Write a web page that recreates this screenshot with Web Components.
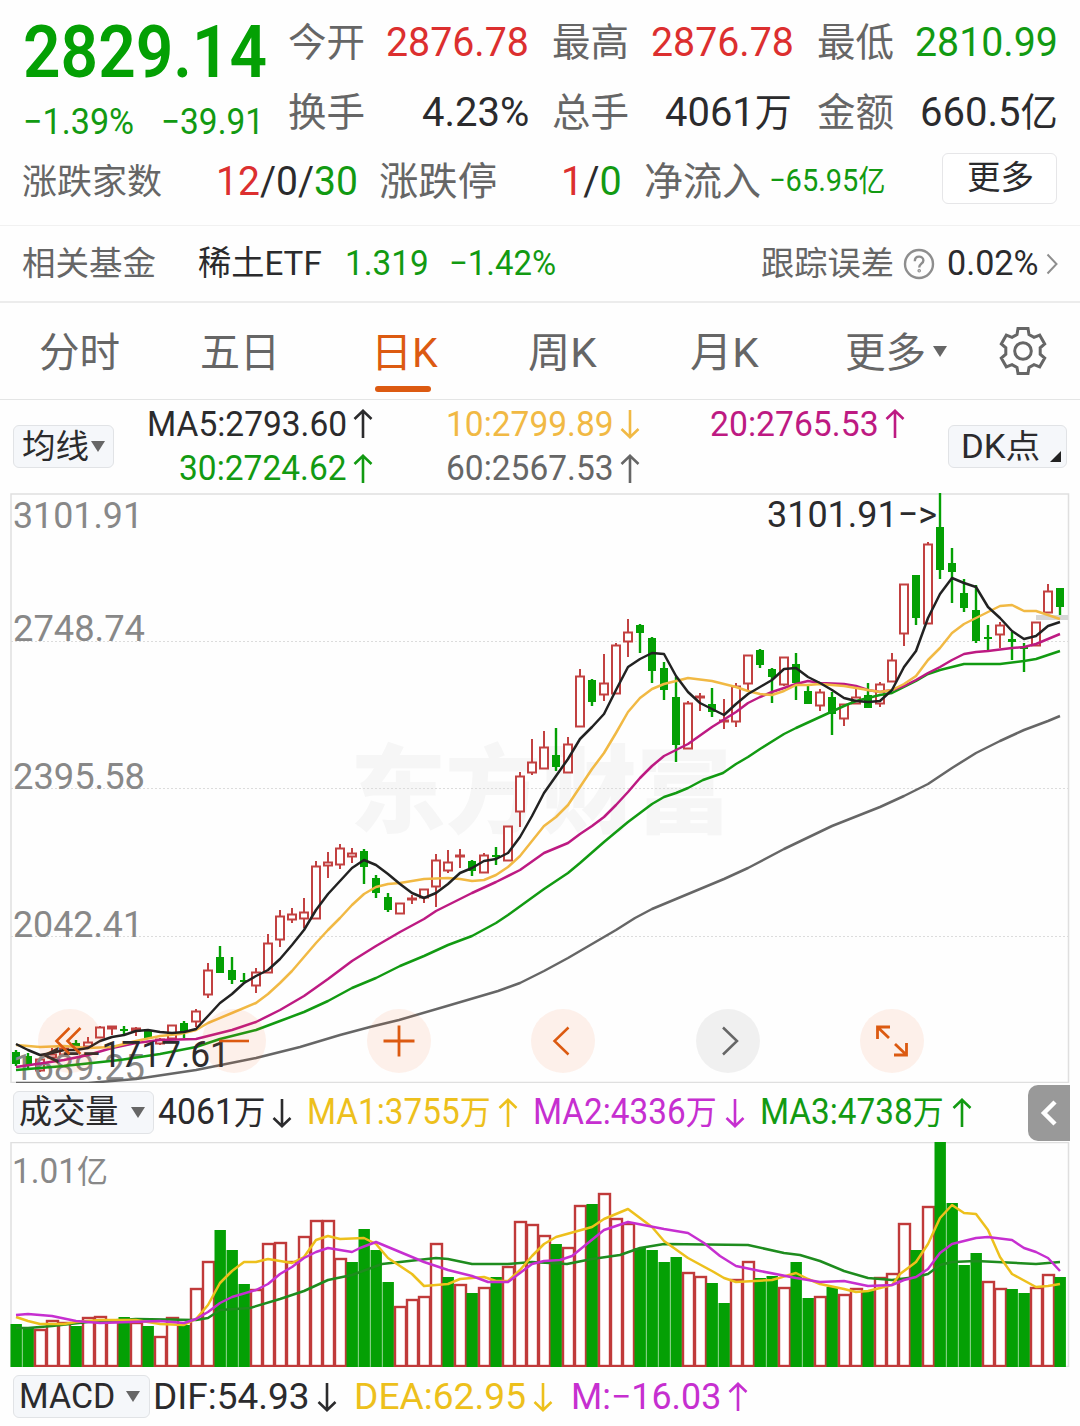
<!DOCTYPE html>
<html lang="zh-CN">
<head>
<meta charset="utf-8">
<title>稀土 2829.14</title>
<style>
	body {
		margin: 0;
		width: 1080px;
		height: 1426px;
		overflow: hidden;
		background: #fefefe;
		color: #2b2b2d;
		font-family: Roboto, "Noto Sans CJK SC", sans-serif;
		--up: #dc2f2f;
		--down: #129a12;
		--label: #666;
		--accent: #dc5a11;
	}
</style>
</head>
<body>
<stock-page></stock-page>

<script>
const define = (name, html, setup) => {
	const template = document.createElement("template");
	template.innerHTML = html;
	customElements.define(name, class extends HTMLElement {
		constructor() {
			super();
			this.attachShadow({ mode: "open" });
			this.shadowRoot.appendChild(template.content.cloneNode(true));
		}

		connectedCallback() {
			if (setup) setup(this, this.shadowRoot);
		}
	});
};

//Text squeezed or stretched to an exact width: w = width, size = font size, gap = space before it.
define("fit-text", `
	<style>
		:host { display: block; flex: none; height: 1.2em; line-height: 1.2em; white-space: nowrap; }
		span { display: inline-block; transform-origin: 0 0; }
		::slotted(small) { font-size: .93em; }
		::slotted(.up) { color: var(--up); }
		::slotted(.down) { color: var(--down); }
	</style>
	<span><slot></slot></span>
`, (host, root) => {
	const w = +host.getAttribute("w");
	const span = root.querySelector("span");
	host.style.fontSize = host.getAttribute("size") + "px";
	host.style.marginLeft = (host.getAttribute("gap") || 0) + "px";
	host.style.width = w + "px";
	span.style.transform = `scaleX(${w / span.offsetWidth})`;
});

const ICONS = {
	up: [20, 30, `<path d="M10 29V2M1.5 10L10 1.8 18.5 10"/>`],
	down: [20, 30, `<path d="M10 1v27M1.5 20L10 28.2 18.5 20"/>`],
	caret: [14, 11, `<path d="M0 0h14L7 11z" fill="currentColor" stroke="none"/>`],
	corner: [11, 11, `<path d="M11 0v11H0z" fill="currentColor" stroke="none"/>`],
	help: [32, 32, `<circle cx="16" cy="16" r="14"/><path d="M11.8 13.2c0-6.4 8.6-5.6 8.6-.8 0 3.2-4.2 3.4-4.2 7"/><circle cx="16.2" cy="22.8" r=".6"/>`],
	next: [12, 22, `<path d="M1.500 1.500L10.500 11 1.500 20.500"/>`],
	gear: [50, 50, `<path d="M20 2.500h10l1 6 5 2.900 5.700-2.200 5 8.700-4.500 3.900v6.400l4.500 3.900-5 8.700-5.700-2.200-5 2.900-1 6H20l-1-6-5-2.900-5.700 2.200-5-8.700 4.500-3.900v-6.400l-4.500-3.900 5-8.700L14 11.400l5-2.900z"/><circle cx="25" cy="25" r="8.300"/>`],
	first: [32, 32, `<path d="M15.500 3L2.500 16l13 13M26.500 3L13.500 16l13 13"/>`],
	minus: [32, 32, `<path d="M1 16h30"/>`],
	plus: [32, 32, `<path d="M.5 16h31M16 .5v31"/>`],
	left: [32, 32, `<path d="M21.500 2.500L7.500 16l14 13.500"/>`],
	right: [32, 32, `<path d="M11 2.500L25 16 11 29.500"/>`],
	expand: [32, 32, `<path d="M1.500 14V2H14M2 2.500l11 10.500M30.500 18v12H18M30 29.500L19 19"/>`],
	back: [18, 28, `<path d="M15 3L4 14l11 11"/>`]
};

//stroke = line width, gap = space before it.
define("stock-icon", `
	<style>
		:host { display: block; flex: none; }
		svg { display: block; fill: none; stroke: currentColor; }
	</style>
	<svg></svg>
`, (host, root) => {
	const [w, h, body] = ICONS[host.getAttribute("name")];
	const svg = root.querySelector("svg");
	svg.setAttribute("width", w);
	svg.setAttribute("height", h);
	svg.setAttribute("stroke-width", host.getAttribute("stroke") || 2.6);
	svg.innerHTML = body;
	host.style.marginLeft = (host.getAttribute("gap") || 0) + "px";
});

define("stock-header", `
	<style>
		:host { display: flex; box-sizing: border-box; height: 226px; flex-direction: column; border-bottom: 1px solid #f1f1f1; }
		.top { display: flex; height: 146px; }
		.price { width: 288px; color: #04a004; }
		.big { display: flex; height: 105px; align-items: center; font-weight: 600; }
		.change { display: flex; height: 36px; align-items: center; color: var(--down); }
		.row { display: flex; height: 69px; align-items: center; }
		.rows .row:first-child { height: 83px; }
		.rows .row + .row { height: 57px; }
		.l { padding-top: 4px; color: var(--label); }
		.up { color: var(--up); }
		.down { color: var(--down); }
		button { display: flex; box-sizing: border-box; width: 115px; height: 51px; margin: 0 0 4px 57px; padding: 0 0 1px; align-items: center; justify-content: center; border: 1.500px solid #e6e6e8; border-radius: 6px; background: #fff; color: inherit; font: inherit; }
	</style>
	<div class="top">
		<div class="price">
			<div class="big"><fit-text w="244" size="72.500" gap="23">2829.14</fit-text></div>
			<div class="change">
				<fit-text w="111" size="36" gap="23">−1.39%</fit-text>
				<fit-text w="103" size="36" gap="27">−39.91</fit-text>
			</div>
		</div>
		<div class="rows">
			<div class="row">
				<fit-text class="l" w="77" size="39">今开</fit-text><fit-text class="up" w="143" size="41.500" gap="21">2876.78</fit-text>
				<fit-text class="l" w="77" size="39" gap="23">最高</fit-text><fit-text class="up" w="143" size="41.500" gap="22">2876.78</fit-text>
				<fit-text class="l" w="77" size="39" gap="23">最低</fit-text><fit-text class="down" w="143" size="41.500" gap="21">2810.99</fit-text>
			</div>
			<div class="row">
				<fit-text class="l" w="77" size="39">换手</fit-text><fit-text w="107" size="41.500" gap="57">4.23%</fit-text>
				<fit-text class="l" w="77" size="39" gap="23">总手</fit-text><fit-text w="127" size="41.500" gap="36">4061<small>万</small></fit-text>
				<fit-text class="l" w="77" size="39" gap="25">金额</fit-text><fit-text w="138" size="41.500" gap="26">660.5<small>亿</small></fit-text>
			</div>
		</div>
	</div>
	<div class="row">
		<fit-text class="l" w="140" size="35" gap="22">涨跌家数</fit-text>
		<fit-text w="142" size="41.500" gap="54"><span class="up">12</span>/0/<span class="down">30</span></fit-text>
		<fit-text class="l" w="118" size="39" gap="21">涨跌停</fit-text>
		<fit-text w="61" size="41.500" gap="64"><span class="up">1</span>/<span class="down">0</span></fit-text>
		<fit-text class="l" w="117" size="39" gap="22">净流入</fit-text>
		<fit-text class="down" w="116" size="31.500" gap="8">−65.95<small>亿</small></fit-text>
		<button><fit-text w="67" size="33">更多</fit-text></button>
	</div>
`);

define("fund-bar", `
	<style>
		:host { display: flex; box-sizing: border-box; height: 77px; align-items: center; border-bottom: 2px solid #ececec; }
		.l { padding-top: 1px; color: var(--label); }
		.down { color: var(--down); }
		.q { color: #8e8e8e; }
	</style>
	<fit-text class="l" w="134" size="33" gap="22">相关基金</fit-text>
	<fit-text w="124" size="34" gap="42">稀土ETF</fit-text>
	<fit-text class="down" w="84" size="34.500" gap="23">1.319</fit-text>
	<fit-text class="down" w="107" size="34.500" gap="20">−1.42%</fit-text>
	<fit-text class="l" w="133" size="33" gap="205">跟踪误差</fit-text>
	<stock-icon class="q" name="help" stroke="2.400" gap="9"></stock-icon>
	<fit-text w="92" size="34.500" gap="12">0.02%</fit-text>
	<stock-icon class="q" name="next" stroke="2" gap="7"></stock-icon>
`);

define("period-tabs", `
	<style>
		:host { display: flex; box-sizing: border-box; height: 97px; align-items: center; border-bottom: 1.500px solid #e4e5e5; color: var(--label); }
		fit-text { padding-top: 5px; }
		.on { display: flex; flex-direction: column; height: 97px; margin-left: 91px; padding-top: 21px; box-sizing: border-box; color: var(--accent); }
		.on::after { content: ""; width: 56px; height: 6px; margin: 8px 0 0 4px; border-radius: 3px; background: var(--accent); }
	</style>
	<fit-text w="81" size="41" gap="39">分时</fit-text>
	<fit-text w="80" size="41" gap="80">五日</fit-text>
	<div class="on"><fit-text w="67" size="41">日K</fit-text></div>
	<fit-text w="69" size="41" gap="90">周K</fit-text>
	<fit-text w="69" size="41" gap="93">月K</fit-text>
	<fit-text w="81" size="41" gap="86">更多</fit-text>
	<stock-icon name="caret" gap="7"></stock-icon>
	<stock-icon name="gear" stroke="3" gap="51"></stock-icon>
`);

//Small button with a label and a mark; the mark goes in its own slot.
define("drop-chip", `
	<style>
		:host { display: flex; box-sizing: border-box; flex: none; height: 43px; align-items: center; border: 1.500px solid #e1e3e6; border-radius: 6px; background: #f5f7fa; }
		.mark { color: #666; }
		:host([corner]) .mark { align-self: flex-end; margin-bottom: 5px; color: #222; }
	</style>
	<slot></slot>
	<div class="mark"><slot name="mark"></slot></div>
`, host => {
	host.style.width = host.getAttribute("w") + "px";
});

define("ma-legend", `
	<style>
		:host { display: flex; height: 93px; align-items: center; }
		drop-chip:first-of-type { margin-left: 13px; }
		.lines { width: 834px; }
		.line { display: flex; height: 44.500px; align-items: center; }
	</style>
	<drop-chip w="101"><fit-text w="67" size="33" gap="8">均线</fit-text><stock-icon slot="mark" name="caret" gap="2"></stock-icon></drop-chip>
	<div class="lines">
		<div class="line">
			<fit-text w="200" size="34.500" gap="33">MA5:2793.60</fit-text><stock-icon name="up" gap="6"></stock-icon>
			<fit-text style="color:#f1b944" w="168" size="34.500" gap="73">10:2799.89</fit-text><stock-icon style="color:#f1b944" name="down" gap="6"></stock-icon>
			<fit-text style="color:#bd1a82" w="169" size="34.500" gap="70">20:2765.53</fit-text><stock-icon style="color:#bd1a82" name="up" gap="6"></stock-icon>
		</div>
		<div class="line">
			<fit-text style="color:#129a12" w="168" size="34.500" gap="65">30:2724.62</fit-text><stock-icon style="color:#129a12" name="up" gap="6"></stock-icon>
			<fit-text style="color:#666" w="168" size="34.500" gap="73">60:2567.53</fit-text><stock-icon style="color:#666" name="up" gap="6"></stock-icon>
		</div>
	</div>
	<drop-chip w="119" corner><fit-text w="79" size="33" gap="12">DK点</fit-text><stock-icon slot="mark" name="corner" gap="10"></stock-icon></drop-chip>
`);

//One candle per 12px: colour, high, body top, body bottom, low.
const CANDLES = `g1050,1052,1064,1066 g1053,1056,1065,1068 r1058,1059,1071,1072 r1048,1054,1058,1060 r1046,1048,1055,1056 g1040,1043,1047,1049 r1037,1042,1047,1047 r1026,1027,1038,1038
r1026,1026,1029,1035 g1026,1029,1031,1034 r1027,1028,1031,1036 g1030,1031,1039,1039 r1038,1039,1044,1045 r1025,1025,1039,1039 g1021,1023,1033,1038 r1009,1011,1022,1027
r963,970,995,998 g946,957,973,973 g957,970,980,984 g973,980,982,984 r968,972,986,993 r934,943,973,973 r910,916,940,947 r908,914,920,923
r898,912,919,928 r861,866,919,919 r852,862,866,878 r844,848,865,869 r848,853,857,863 g849,851,867,884 g875,878,893,898 g893,897,910,912
r903,903,914,914 r895,898,900,904 r889,889,898,903 r854,860,887,907 r850,862,871,873 r849,855,857,868 g860,861,871,876 r853,855,873,873
g847,855,857,865 r826,826,861,861 r772,776,812,827 r739,762,773,775 r731,747,769,769 g728,755,767,771 r737,744,773,773 r669,676,727,727
g679,680,702,706 r654,683,695,701 r643,645,694,694 r619,632,642,657 g624,625,633,653 g637,638,671,683 g662,668,690,700 g677,697,745,762
r701,703,749,749 r693,696,698,711 g688,704,712,717 r699,720,722,729 r683,686,722,727 r655,655,684,690 g649,650,665,668 g668,669,677,703
r657,657,685,686 g653,664,683,700 g684,691,704,704 r689,692,706,711 g692,697,714,735 r704,704,719,726 r688,697,704,704 g683,695,708,708
r682,684,704,707 r653,660,682,682 r584,584,634,646 g575,575,618,625 r542,544,624,624 g493,527,570,579 g548,563,572,603 g579,593,608,612
g585,610,641,643 g625,637,639,651 r622,625,635,648 g632,639,642,660 g643,647,649,672 r622,622,646,646 r584,591,613,613 g588,588,607,615`.split(/\s+/);

const MA60 = "16,1083 88,1083 136,1079 196,1070 256,1058 300,1047 340,1035 370,1027 399,1020 447,1006 498,991 520,983 544,971 568,958 592,944 616,930 635,918 652,909 676,899 700,889 724,879 748,868 784,849 832,826 880,807 904,796 928,784 952,768 976,753 1000,741 1024,730 1048,721 1060,716";
const MA30 = "16,1070 64,1066 120,1060 160,1054 196,1047 220,1039 256,1030 280,1021 304,1012 328,1001 352,988 376,978 400,966 424,956 448,945 472,936 496,923 508,915 544,889 568,873 580,863 604,842 628,822 652,804 664,797 676,793 688,788 703,780 723,773 736,764 748,757 760,749 784,734 796,728 820,717 844,706 856,701 880,695 892,693 916,681 928,674 940,670 952,667 964,664 1000,664 1024,661 1036,659 1048,655 1060,651";
const MA20 = "16,1067 64,1060 88,1055 112,1048 136,1043 160,1040 196,1039 208,1036 232,1030 256,1022 280,1010 304,996 328,979 352,961 376,946 400,932 424,919 436,911 472,893 496,882 520,870 544,853 568,843 580,834 592,826 604,817 616,805 628,792 640,778 652,766 664,756 676,750 688,744 712,727 736,712 748,703 760,697 772,692 784,688 796,684 808,681 820,683 844,684 856,686 868,690 880,692 892,690 904,686 916,680 928,673 940,667 952,660 964,654 976,652 988,651 1012,648 1024,647 1036,644 1048,639 1060,634";
const MA10 = "16,1045 40,1047 64,1046 88,1048 112,1047 136,1041 160,1036 180,1034 196,1030 208,1023 232,1013 256,1003 268,994 280,983 292,971 304,957 316,943 328,930 340,918 352,905 364,894 376,887 388,884 400,883 424,879 448,878 460,879 472,881 484,880 496,875 508,867 520,856 532,841 544,826 556,817 568,805 580,787 592,769 604,753 616,733 628,712 640,698 652,689 664,684 676,681 688,678 712,681 736,687 748,691 760,694 772,695 784,691 796,685 808,685 820,684 844,686 856,688 868,690 880,692 892,690 904,684 916,676 928,660 940,648 952,633 964,624 976,618 988,612 1000,606 1012,605 1024,611 1036,611 1048,615 1060,619";
const MA5 = "16,1044 28,1050 40,1055 52,1053 64,1050 76,1050 88,1048 100,1041 112,1037 124,1035 136,1031 148,1030 160,1032 172,1033 184,1032 196,1029 208,1016 220,1003 232,994 244,983 256,976 268,970 280,959 292,945 304,930 316,910 328,894 340,881 352,868 364,860 376,865 388,874 400,884 412,893 424,898 436,893 448,884 460,873 472,868 484,861 496,859 508,853 520,837 532,816 544,793 556,776 568,759 580,739 592,727 604,714 616,690 628,667 640,659 652,653 664,654 676,676 688,692 700,703 712,709 724,715 736,704 748,694 760,687 772,680 784,669 796,668 808,677 820,683 832,690 844,698 856,701 868,702 880,701 892,690 904,667 916,651 928,618 940,594 952,578 964,583 976,587 988,607 1000,618 1012,631 1024,639 1036,636 1048,626 1060,622";

const drawCandle = (item, i) => {
	const [high, top, bottom, low] = item.slice(1).split(",").map(Number);
	const x = 16 + i * 12;
	if (item[0] === "g") {
		return `<path d="M${x} ${high}V${low}" stroke="#04a004" stroke-width="2.400"/>
			<rect x="${x - 4}" y="${top}" width="8" height="${bottom - top}" fill="#04a004"/>`;
	}
	return `<path d="M${x} ${high}V${top}M${x} ${bottom}V${low}" stroke="#c24141" stroke-width="2"/>
		<rect x="${x - 4}" y="${top + .5}" width="8" height="${Math.max(bottom - top - 1, 1)}" fill="#fff" stroke="#c24141" stroke-width="2"/>`;
};

const line = (points, colour) => `<polyline points="${points}" fill="none" stroke="${colour}" stroke-width="2.500" stroke-linejoin="round"/>`;

define("kline-chart", `
	<style>
		:host { display: block; position: relative; height: 590px; }
		svg { display: block; }
		.axis { fill: #888; font-size: 36px; }
		.note { fill: #2b2b2d; font-size: 37px; }
		.brand { fill: #f6f6f6; font-size: 96px; font-weight: 900; }
		.tools { display: flex; position: absolute; left: 38px; top: 516px; gap: 100.400px; }
		.tools div { display: flex; width: 64px; height: 64px; align-items: center; justify-content: center; border-radius: 50%; background: rgba(248, 98, 30, .09); color: var(--accent); }
		.tools .off { background: rgba(0, 0, 0, .055); color: #666; }
	</style>
	<svg width="1080" height="590" viewBox="0 493 1080 590"></svg>
	<div class="tools">
		<div><stock-icon name="first"></stock-icon></div>
		<div><stock-icon name="minus"></stock-icon></div>
		<div><stock-icon name="plus" stroke="2.800"></stock-icon></div>
		<div><stock-icon name="left" stroke="2.500"></stock-icon></div>
		<div class="off"><stock-icon name="right" stroke="2.500"></stock-icon></div>
		<div><stock-icon name="expand" stroke="2.800"></stock-icon></div>
	</div>
`, (host, root) => {
	const axis = [["3101.91", 528, 130], ["2748.74", 641, 132], ["2395.58", 789, 132], ["2042.41", 937, 130], ["1689.25", 1080, 132]];
	root.querySelector("svg").innerHTML = `
		<text class="brand" x="350" y="825" textLength="382">东方财富</text>
		<rect x="11" y="494" width="1057.500" height="588.500" fill="none" stroke="#dfdfdf" stroke-width="1.500"/>
		<path d="M11 641.500H1068M11 788.500H1068M11 936.500H1068" stroke="#dcdcdc" stroke-dasharray="2 2"/>
		<rect x="1036" y="615" width="32" height="5" fill="#d6d6d6"/>
		${CANDLES.map(drawCandle).join("")}
		${axis.map(([t, y, w]) => `<text class="axis" x="13" y="${y}" textLength="${w}" lengthAdjust="spacingAndGlyphs">${t}</text>`).join("")}
		${line(MA60, "#666")}${line(MA30, "#129a12")}${line(MA20, "#bd1a82")}${line(MA10, "#f1b944")}${line(MA5, "#222")}
		<text class="note" x="767" y="527" textLength="170" lengthAdjust="spacingAndGlyphs">3101.91−&gt;</text>
		<text class="note" x="43" y="1067" textLength="187" lengthAdjust="spacingAndGlyphs">&lt;−−1717.61</text>`;
});

define("volume-legend", `
	<style>
		:host { display: flex; height: 59px; align-items: center; }
		drop-chip { margin-left: 13px; }
		.y { color: #edc01c; }
		.m { color: #c62fd0; }
		.g { color: #129a12; }
		.back { display: flex; width: 42px; height: 56px; margin: 0 0 0 56px; align-items: center; justify-content: center; border-radius: 10px 0 0 10px; background: #999; color: #fff; }
	</style>
	<drop-chip w="141"><fit-text w="100" size="33.500" gap="5">成交量</fit-text><stock-icon slot="mark" name="caret" gap="12"></stock-icon></drop-chip>
	<fit-text w="107" size="36" gap="4">4061<small>万</small></fit-text><stock-icon name="down" gap="7"></stock-icon>
	<fit-text class="y" w="184" size="36" gap="15">MA1:3755<small>万</small></fit-text><stock-icon class="y" name="up" gap="7"></stock-icon>
	<fit-text class="m" w="184" size="36" gap="15">MA2:4336<small>万</small></fit-text><stock-icon class="m" name="down" gap="8"></stock-icon>
	<fit-text class="g" w="184" size="36" gap="15">MA3:4738<small>万</small></fit-text><stock-icon class="g" name="up" gap="8"></stock-icon>
	<div class="back"><stock-icon name="back" stroke="4.500"></stock-icon></div>
`);

//Colour and top of each bar; all of them stand on y = 1366.
const VOLUMES = `g1324 g1327 r1329 r1320 r1322 g1326 r1317 r1316 r1321 g1317 r1322 g1326 r1336 r1317 g1325 r1288 r1261 g1230 g1250 g1284 r1289 r1243
r1242 r1261 r1236 r1220 r1220 r1258 g1262 g1229 g1250 g1282 r1306 r1299 r1296 r1243 g1277 r1284 g1293 r1287 g1277 r1266 r1221 r1224
r1235 g1244 r1247 r1205 g1204 r1193 r1218 r1223 g1248 g1250 g1262 g1257 r1272 r1276 g1283 g1303 r1279 r1261 g1278 g1276 r1287 g1262
g1298 r1296 g1287 r1294 r1288 g1291 r1277 r1273 r1223 g1250 r1206 g1142 g1203 g1265 g1253 r1281 r1288 g1289 g1293 r1287 r1274 g1277`.split(/\s+/);

const VOL1 = "16,1317 28,1321 40,1324 64,1324 76,1322 100,1320 136,1320 160,1324 184,1325 196,1319 208,1305 220,1283 232,1271 244,1262 256,1262 268,1259 292,1263 304,1257 316,1240 328,1236 340,1239 364,1238 376,1244 388,1258 412,1274 424,1286 448,1284 460,1279 484,1277 496,1281 508,1281 520,1270 532,1256 544,1244 556,1237 592,1227 604,1219 628,1209 652,1227 664,1241 688,1258 712,1271 724,1278 736,1282 772,1280 796,1273 808,1279 820,1284 844,1289 856,1292 868,1291 880,1288 892,1285 900,1274 916,1262 928,1244 940,1218 952,1205 964,1213 976,1214 988,1230 1000,1257 1012,1274 1036,1287 1048,1286 1060,1284";
const VOL2 = "16,1315 28,1314 52,1316 76,1321 100,1323 160,1321 184,1323 196,1319 208,1312 220,1303 232,1297 256,1290 268,1284 280,1274 292,1267 304,1258 316,1252 328,1248 352,1252 360,1248 376,1242 400,1252 424,1262 448,1270 472,1276 488,1282 508,1282 520,1273 532,1264 544,1261 560,1260 572,1256 588,1243 604,1230 628,1222 664,1229 688,1233 704,1243 720,1256 736,1266 760,1271 796,1278 820,1282 844,1281 868,1286 892,1285 904,1280 916,1277 928,1269 940,1253 952,1244 976,1238 988,1237 1012,1240 1024,1248 1036,1252 1048,1258 1060,1271";
const VOL3 = "16,1328 28,1328 52,1326 88,1322 136,1319 196,1320 208,1318 220,1310 250,1308 280,1299 304,1291 328,1280 352,1275 382,1264 400,1262 436,1258 448,1259 472,1264 508,1264 532,1262 567,1264 592,1259 620,1255 640,1248 664,1244 748,1245 784,1253 800,1255 820,1261 844,1271 868,1278 892,1280 916,1277 928,1274 940,1265 952,1262 976,1261 1036,1264 1060,1262";

const drawVolume = (item, i) => {
	const x = 16 + i * 12;
	const top = +item.slice(1);
	return item[0] === "g"
		? `<rect x="${x - 5.5}" y="${top}" width="11.400" height="${1367 - top}" fill="#04a004"/>`
		: `<rect x="${x - 5}" y="${top + 1}" width="11" height="${1365 - top}" fill="#fff" stroke="#c03a3a" stroke-width="2.400"/>`;
};

define("volume-chart", `
	<style>
		:host { display: block; height: 225px; }
		svg { display: block; }
		text { fill: #888; font-size: 34.500px; }
		.cn { font-size: 32px; }
	</style>
	<svg width="1080" height="225" viewBox="0 1142 1080 225"></svg>
`, (host, root) => {
	root.querySelector("svg").innerHTML = `
		<rect x="11" y="1142.500" width="1057.500" height="224" fill="none" stroke="#dfdfdf" stroke-width="1.500"/>
		<text x="12" y="1183" textLength="96" lengthAdjust="spacingAndGlyphs">1.01<tspan class="cn">亿</tspan></text>
		${VOLUMES.map(drawVolume).join("")}
		${line(VOL3, "#1e8c1e")}${line(VOL1, "#edc01c")}${line(VOL2, "#c62fd0")}`;
});

define("macd-legend", `
	<style>
		:host { display: flex; height: 59px; align-items: center; }
		drop-chip { margin-left: 13px; }
		.y { color: #edc01c; }
		.m { color: #c62fd0; }
	</style>
	<drop-chip w="137"><fit-text w="96" size="35" gap="5">MACD</fit-text><stock-icon slot="mark" name="caret" gap="11"></stock-icon></drop-chip>
	<fit-text w="157" size="36.500" gap="3">DIF:54.93</fit-text><stock-icon name="down" gap="7"></stock-icon>
	<fit-text class="y" w="172" size="36.500" gap="17">DEA:62.95</fit-text><stock-icon class="y" name="down" gap="7"></stock-icon>
	<fit-text class="m" w="150" size="36.500" gap="18">M:−16.03</fit-text><stock-icon class="m" name="up" gap="7"></stock-icon>
`);

define("stock-page", `
	<style>
		:host { display: flex; width: 1080px; height: 1426px; flex-direction: column; overflow: hidden; }
	</style>
	<stock-header></stock-header>
	<fund-bar></fund-bar>
	<period-tabs></period-tabs>
	<ma-legend></ma-legend>
	<kline-chart></kline-chart>
	<volume-legend></volume-legend>
	<volume-chart></volume-chart>
	<macd-legend></macd-legend>
`);
</script>
</body>
</html>
